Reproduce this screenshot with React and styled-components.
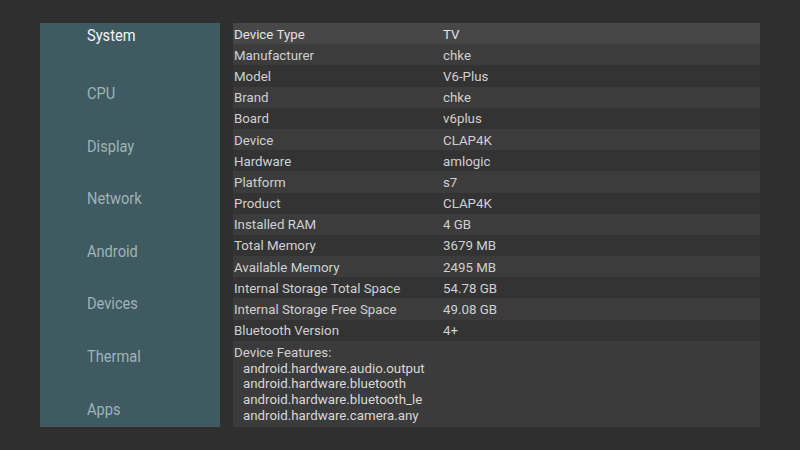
import styled, { createGlobalStyle } from "styled-components"

const GlobalStyle = createGlobalStyle`
  html, body {
    margin: 0;
    padding: 0;
    background: #2f2f2f;
  }
  body {
    font-family: Roboto, "Liberation Sans", sans-serif;
  }
`

const Screen = styled.div`
  width: 800px;
  height: 450px;
  box-sizing: border-box;
  padding: 23px 40px 0 40px;
  display: flex;
  gap: 13px;
  background: #2f2f2f;
`

const Sidebar = styled.nav`
  width: 180px;
  height: 404px;
  background: #405a62;
  display: flex;
  flex-direction: column;
  gap: 28.6px;
  padding-left: 47px;
  box-sizing: border-box;
`

const MenuItem = styled.div`
  height: 24px;
  line-height: 24px;
  font-size: 17px;
  color: ${(p) => (p.$active ? "#f4f6f6" : "#9fb3b8")};
  margin-bottom: ${(p) => (p.$active ? "5.4px" : "0")};

  span {
    display: inline-block;
    transform: scaleX(0.86);
    transform-origin: left center;
  }
`

const Table = styled.div`
  width: 527px;
  height: 404px;
  display: flex;
  flex-direction: column;
`

const Row = styled.div`
  display: grid;
  grid-template-columns: 209px 1fr;
  height: 21.2px;
  align-items: center;
  padding: 1px 0 0 1px;
  box-sizing: border-box;
  font-size: 13.3px;
  color: ${(p) => (p.$active ? "#e2e2e2" : "#d0d0d0")};
  background: ${(p) => (p.$active ? "#474747" : p.$even ? "#3c3c3c" : "#333333")};
`

const Features = styled.div`
  flex: 1;
  background: #3b3b3b;
  padding: 4px 0 0 1px;
  font-size: 13.3px;
  line-height: 15.7px;
  color: #d0d0d0;
`

const Feature = styled.div`
  padding-left: 9px;
  color: #d8d8d8;
`

const menu = ["System", "CPU", "Display", "Network", "Android", "Devices", "Thermal", "Apps"]

const rows = [
  ["Device Type", "TV"],
  ["Manufacturer", "chke"],
  ["Model", "V6-Plus"],
  ["Brand", "chke"],
  ["Board", "v6plus"],
  ["Device", "CLAP4K"],
  ["Hardware", "amlogic"],
  ["Platform", "s7"],
  ["Product", "CLAP4K"],
  ["Installed RAM", "4 GB"],
  ["Total Memory", "3679 MB"],
  ["Available Memory", "2495 MB"],
  ["Internal Storage Total Space", "54.78 GB"],
  ["Internal Storage Free Space", "49.08 GB"],
  ["Bluetooth Version", "4+"],
]

const features = [
  "android.hardware.audio.output",
  "android.hardware.bluetooth",
  "android.hardware.bluetooth_le",
  "android.hardware.camera.any",
]

export default function App() {
  return (
    <>
      <GlobalStyle />
      <Screen>
        <Sidebar>
          {menu.map((m, i) => (
            <MenuItem key={m} $active={i === 0}>
              <span>{m}</span>
            </MenuItem>
          ))}
        </Sidebar>
        <Table>
          {rows.map(([label, value], i) => (
            <Row key={label} $active={i === 0} $even={i % 2 === 1}>
              <span>{label}</span>
              <span>{value}</span>
            </Row>
          ))}
          <Features>
            Device Features:
            {features.map((f) => (
              <Feature key={f}>{f}</Feature>
            ))}
          </Features>
        </Table>
      </Screen>
    </>
  )
}
